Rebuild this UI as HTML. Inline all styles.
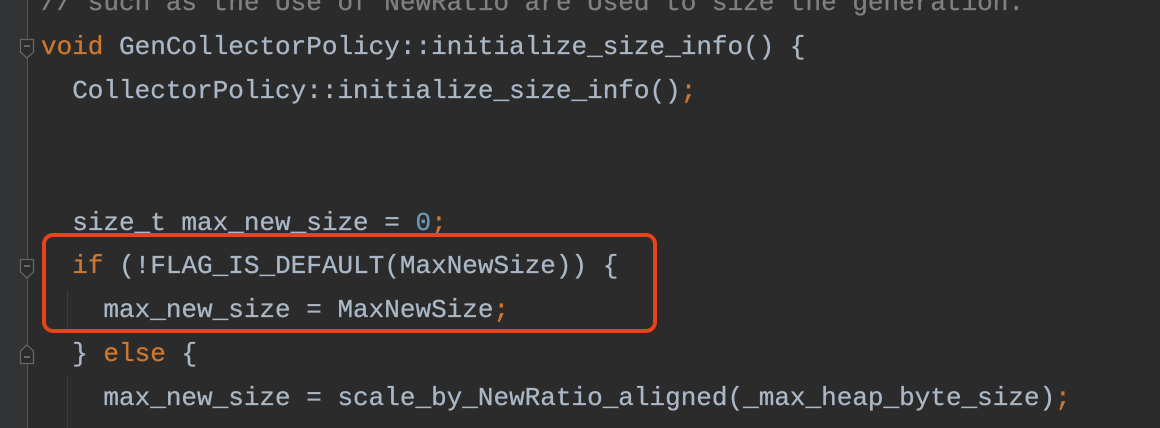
<!DOCTYPE html>
<html><head><style>
html,body{margin:0;padding:0;}
body{width:1160px;height:428px;background:#2b2b2b;position:relative;overflow:hidden;font-family:"Liberation Mono",monospace;}
.gut{position:absolute;left:0;top:0;width:27px;height:428px;background:#313335;}
.gl{position:absolute;left:27px;top:0;width:1px;height:428px;background:#555;}
.code{position:absolute;left:41px;top:-18px;font-size:26px;line-height:43.9px;color:#a9b7c6;white-space:pre;-webkit-text-stroke:0.3px #a9b7c6;}
.k{color:#cc7832;-webkit-text-stroke-color:#cc7832}.c{color:#808080;-webkit-text-stroke-color:#808080}.n{color:#6897bb;-webkit-text-stroke-color:#6897bb}
.box{position:absolute;left:42px;top:233px;width:607px;height:92px;border:4px solid #e8431c;border-radius:11px;}
.guide{position:absolute;left:67px;width:1px;background:#3c3c3c;}
svg.f{position:absolute;left:19px;}
</style></head><body>
<div class="gut"></div><div class="gl"></div>
<div class="guide" style="top:290px;height:42px"></div>
<div class="guide" style="top:376px;height:52px"></div>
<svg class="f" style="top:38px" width="16" height="24"><path d="M1.5 1.5H14.5V14L8 20L1.5 14Z" fill="#2b2b2b" stroke="#666" stroke-width="1.3"/><path d="M5 8H11" stroke="#888" stroke-width="1.3"/></svg>
<svg class="f" style="top:258px" width="16" height="24"><path d="M1.5 1.5H14.5V14L8 20L1.5 14Z" fill="#2b2b2b" stroke="#666" stroke-width="1.3"/><path d="M5 8H11" stroke="#888" stroke-width="1.3"/></svg>
<svg class="f" style="top:341px" width="16" height="24"><path d="M1.5 22.5H14.5V10L8 4L1.5 10Z" fill="#2b2b2b" stroke="#666" stroke-width="1.3"/><path d="M5 16H11" stroke="#888" stroke-width="1.3"/></svg>
<div class="code"><span class="c">// such as the Use of NewRatio are Used to size the generation.</span>
<span class="k">void</span> GenCollectorPolicy::initialize_size_info() {
  CollectorPolicy::initialize_size_info()<span class="k">;</span>


  size_t max_new_size = <span class="n">0</span><span class="k">;</span>
  <span class="k">if</span> (!FLAG_IS_DEFAULT(MaxNewSize)) {
    max_new_size = MaxNewSize<span class="k">;</span>
  } <span class="k">else</span> {
    max_new_size = scale_by_NewRatio_aligned(_max_heap_byte_size)<span class="k">;</span>
</div>
<div class="box"></div>
</body></html>
